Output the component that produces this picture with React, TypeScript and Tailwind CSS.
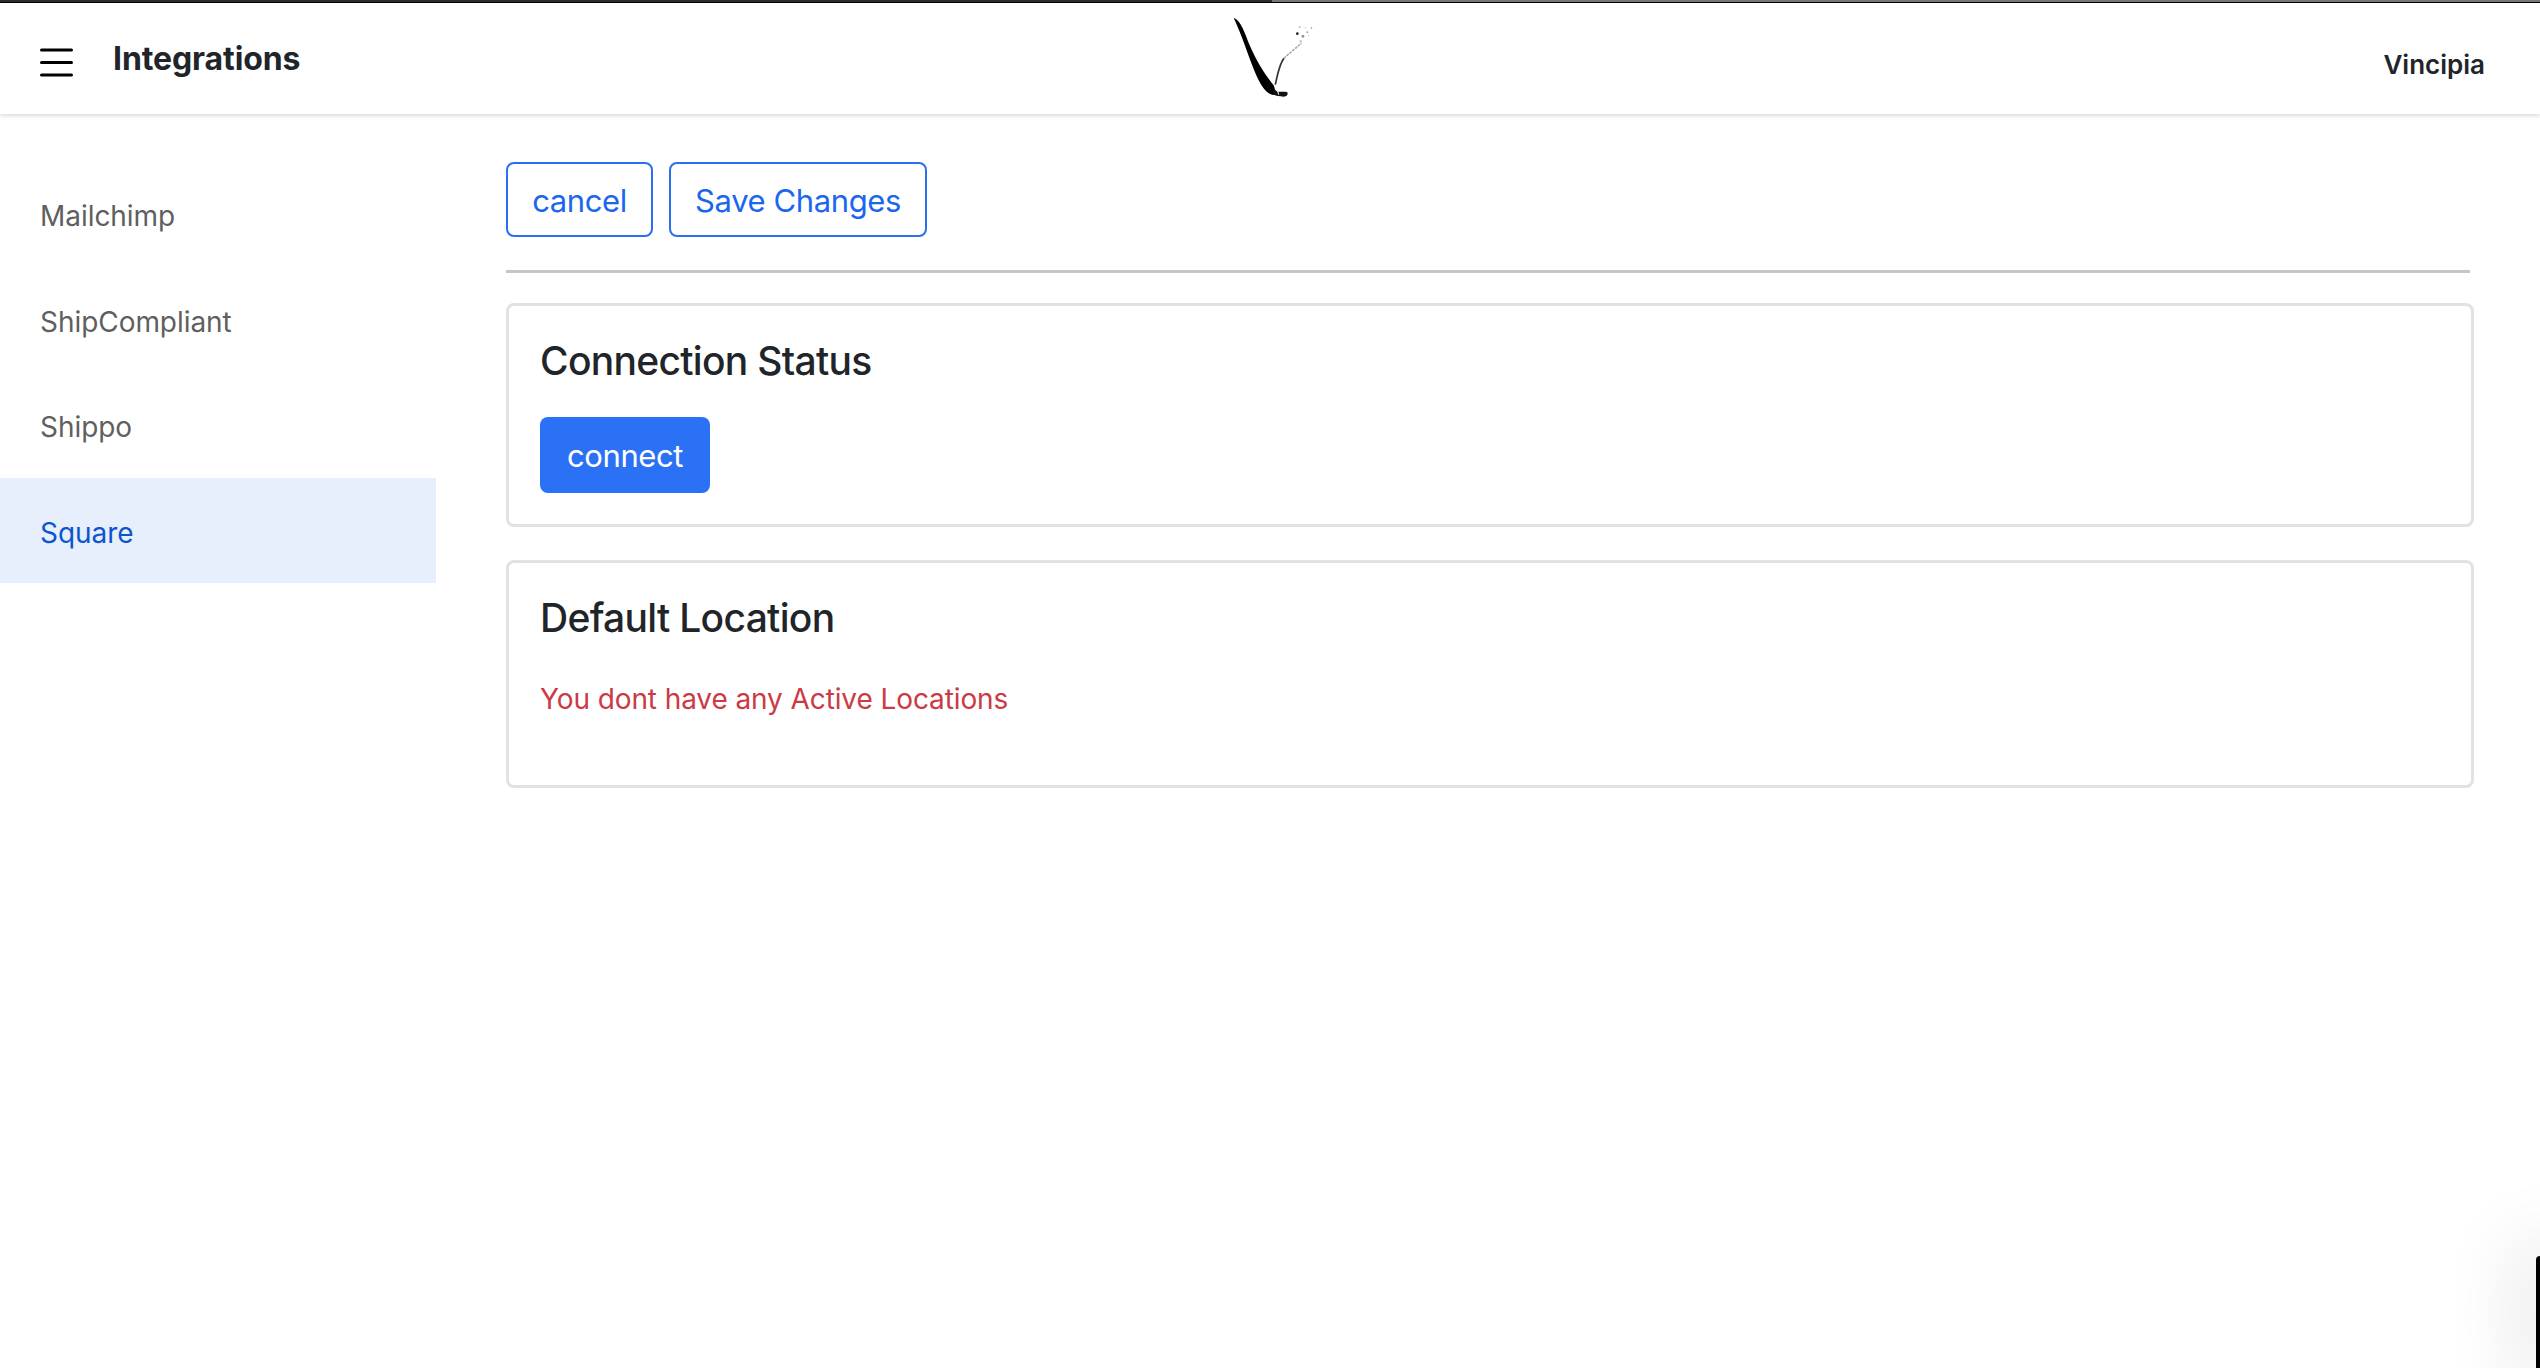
import React from 'react'

const navItems = ['Mailchimp', 'ShipCompliant', 'Shippo', 'Square']

function Logo() {
  return (
    <svg width="90" height="100" viewBox="80 10 270 300" className="block">
      <path d="M97 55 C112 58 126 85 140 125 C160 175 190 225 218 258 L222 286 C195 290 172 250 150 190 C130 135 112 85 97 55 Z" fill="#000" />
      <path d="M218 262 C225 285 240 272 258 278 C262 288 252 294 238 290 C228 290 222 288 215 284 Z" fill="#111" />
      <path d="M222 255 C228 225 236 190 248 176" fill="none" stroke="#333" strokeWidth="5" />
      <path d="M248 176 C262 162 285 145 300 130" fill="none" stroke="#999" strokeWidth="4" strokeDasharray="8 3" />
      <path d="M226 262 L232 285" fill="none" stroke="#fff" strokeWidth="3" />
      <circle cx="288" cy="102" r="4" fill="#222" />
      <circle cx="305" cy="110" r="4" fill="#888" />
      <circle cx="318" cy="98" r="3" fill="#aaa" />
      <circle cx="295" cy="82" r="3" fill="#bbb" />
      <circle cx="330" cy="85" r="3" fill="#bbb" />
      <circle cx="312" cy="84" r="2" fill="#ccc" />
      <circle cx="298" cy="125" r="3" fill="#aaa" />
      <circle cx="322" cy="108" r="2" fill="#ccc" />
      <circle cx="285" cy="145" r="2" fill="#bbb" />
    </svg>
  )
}

function Card({ title, children, className }: { title: string; children: React.ReactNode; className: string }) {
  return (
    <section className={`border-[3px] border-[#e2e2e2] rounded-lg px-[31px] pt-[31px] ${className}`}>
      <h5 className="text-[39px] leading-[47px] font-medium text-[#212529] tracking-[-0.7px]">{title}</h5>
      {children}
    </section>
  )
}

export default function App() {
  return (
    <div className="relative w-[2540px] h-[1368px] overflow-hidden bg-white font-['Inter',sans-serif]">
      {/* top bar */}
      <header className="h-[114px] bg-white shadow-[0_2px_4px_rgba(0,0,0,0.14)]">
        <div className="flex h-[3px] border-b border-black">
          <div className="w-[1272px] bg-[#2b2b2b]" />
          <div className="flex-1 bg-[#777777]" />
        </div>
        <div className="grid grid-cols-3 items-center h-[111px] pl-10 pr-[55px]">
          <div className="flex items-center gap-10">
            <svg width="33" height="30" viewBox="0 0 33 30" className="block mt-[3px]">
              <path d="M1.5 3h30M1.5 15.5h30M1.5 28h30" stroke="#000" strokeWidth="3" strokeLinecap="round" />
            </svg>
            <span className="text-[32px] font-bold text-[#212529] tracking-[-0.1px] mb-[2px]">Integrations</span>
          </div>
          <div className="flex justify-center pl-[20px] mb-[14px]">
            <Logo />
          </div>
          <div className="flex justify-end pt-[9px]">
            <span className="text-[26px] font-semibold text-[#212529]">Vincipia</span>
          </div>
        </div>
      </header>

      <div className="flex">
        {/* side nav */}
        <nav className="w-[436px] pt-[47px] shrink-0">
          {navItems.map(item => (
            <div
              key={item}
              className={`flex items-center h-[105.5px] pl-10 pt-[5px] text-[28px] tracking-[-0.05px] ${
                item === 'Square' ? 'bg-[#e7effc] text-[#0d55cf]' : 'text-[#5f5f5f]'
              }`}
            >
              {item}
            </div>
          ))}
        </nav>

        {/* main */}
        <main className="flex-1 pl-[70px] pr-[66px] pt-[48px]">
          <div className="flex gap-4">
            <button className="h-[75px] w-[147px] pt-[3px] border-[2.5px] border-[#2a6ff0] rounded-lg text-[31px] tracking-[-0.4px] text-[#1c66ee]">cancel</button>
            <button className="h-[75px] w-[258px] pt-[3px] border-[2.5px] border-[#2a6ff0] rounded-lg text-[31px] tracking-[-0.4px] text-[#1c66ee]">Save Changes</button>
          </div>
          <hr className="mt-[33px] mr-[4px] border-t-[3px] border-[#c6c6c6]" />
          <Card title="Connection Status" className="mt-[30px] h-[224px]">
            <button className="mt-[33px] h-[76px] w-[170px] pt-[3px] rounded-lg bg-[#2b71f6] text-[31px] tracking-[-0.4px] text-white">connect</button>
          </Card>
          <Card title="Default Location" className="mt-[33px] h-[228px]">
            <p className="mt-[37px] text-[28px] tracking-[-0.1px] text-[#cb3a45]">You dont have any Active Locations</p>
          </Card>
        </main>
      </div>

      {/* corner of another window */}
      <div className="absolute right-0 bottom-0 w-1 h-[112px] bg-black rounded-tl-lg shadow-[0_0_70px_20px_rgba(0,0,0,0.1)]" />
    </div>
  )
}
